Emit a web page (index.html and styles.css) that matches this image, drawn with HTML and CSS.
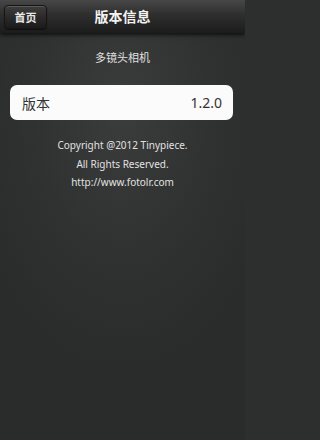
FILE: index.html
```html
<!DOCTYPE html>
<html lang="zh">
<head>
<meta charset="utf-8">
<link rel="stylesheet" href="styles.css">
</head>
<body>
<div class="screen">
  <header class="topbar">
    <div class="left"><button class="home">首页</button></div>
    <h1 class="title">版本信息</h1>
    <div class="right"></div>
  </header>
  <p class="appname">多镜头相机</p>
  <div class="card">
    <span class="label">版本</span>
    <span class="value">1.2.0</span>
  </div>
  <div class="credits">
    <p>Copyright @2012 Tinypiece.</p>
    <p>All Rights Reserved.</p>
    <p>http://www.fotolr.com</p>
  </div>
</div>
</body>
</html>
```
FILE: styles.css
```css
html, body {
  margin: 0;
  padding: 0;
  background: #2d2e2e;
}
body {
  width: 245px;
  height: 440px;
  overflow: hidden;
  font-family: "Noto Sans", "Open Sans", "Noto Sans CJK SC", sans-serif;
}
.screen {
  height: 440px;
  background: radial-gradient(ellipse 160px 260px at 50% 25%, #3b3c3c 0%, #303131 55%, #2a2b2b 100%);
}
.topbar {
  height: 33px;
  display: grid;
  grid-template-columns: 1fr auto 1fr;
  align-items: center;
  background: linear-gradient(#474747 0%, #2e2e2e 45%, #1c1c1c 100%);
  box-shadow: 0 2px 4px rgba(0,0,0,0.7);
}
.left {
  padding-left: 4px;
}
.home {
  width: 43px;
  height: 24px;
  padding: 0;
  border: 1px solid #151515;
  border-radius: 4px;
  background: linear-gradient(#3e3e3e 0%, #2a2a2a 50%, #1b1b1b 100%);
  box-shadow: inset 0 1px 0 rgba(255,255,255,0.15), 0 1px 1px rgba(0,0,0,0.5);
  color: #e6e6e6;
  font-family: "Noto Sans CJK SC", sans-serif;
  font-size: 11px;
  font-weight: bold;
}
.title {
  margin: 0;
  color: #f2f2f2;
  font-family: "Noto Sans CJK SC", sans-serif;
  font-size: 14px;
  font-weight: bold;
  line-height: 33px;
}
.appname {
  margin: 15px 0 0;
  text-align: center;
  color: #e0e0e0;
  font-family: "Noto Sans CJK SC", sans-serif;
  font-size: 11px;
  line-height: 18px;
}
.card {
  margin: 19px 12px 0 10px;
  height: 35px;
  box-sizing: border-box;
  padding: 0 11px 0 12px;
  display: flex;
  align-items: center;
  justify-content: space-between;
  background: #fbfbfb;
  border-radius: 7px;
  color: #333;
  font-size: 14px;
}
.label {
  font-family: "Noto Sans CJK SC", sans-serif;
}
.value {
  font-family: "Noto Sans", sans-serif;
}
.credits {
  margin-top: 16px;
  text-align: center;
  color: #e2e2e2;
  font-size: 10px;
}
.credits p {
  margin: 0;
  line-height: 18.5px;
}
```
